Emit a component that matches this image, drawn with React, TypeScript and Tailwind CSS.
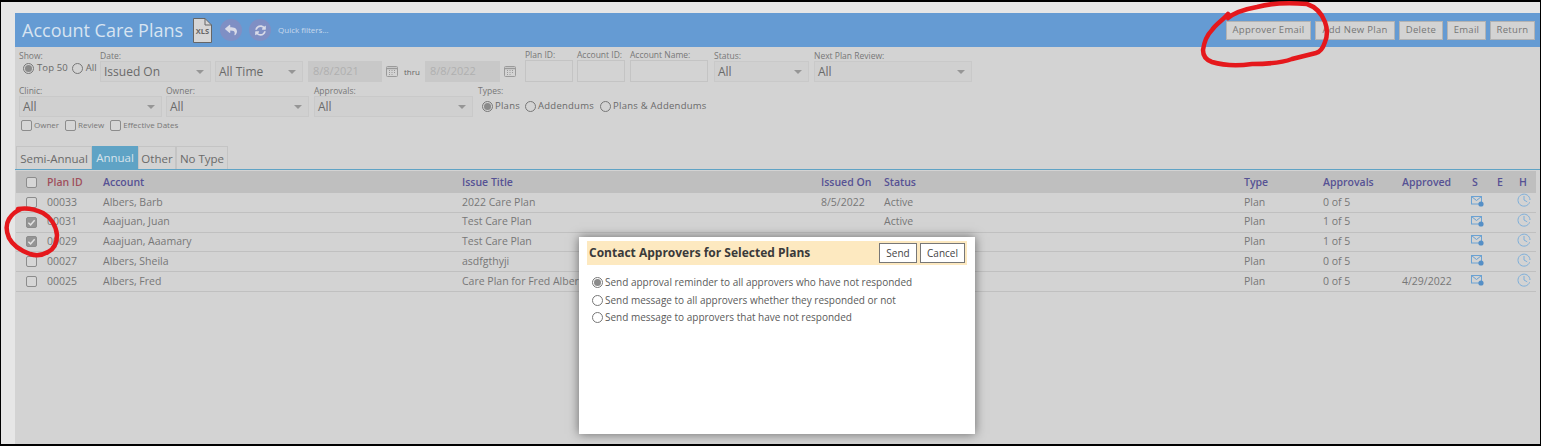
import React from "react";
import { FaReply, FaSyncAlt } from "react-icons/fa";

const Radio = ({ on, className = "" }: { on?: boolean; className?: string }) => (
  <span className={`inline-flex h-[11px] w-[11px] shrink-0 items-center justify-center rounded-full border border-[#777] bg-transparent ${className}`}>
    {on && <span className="h-[7px] w-[7px] rounded-full bg-[#8a8a8a]" />}
  </span>
);

const Check = ({ on, className = "" }: { on?: boolean; className?: string }) => (
  <span className={`inline-flex h-[11px] w-[11px] shrink-0 items-center justify-center rounded-[2px] border border-[#8c8c8c] ${on ? "bg-[#949494]" : "bg-[#d6d6d6]"} ${className}`}>
    {on && (
      <svg viewBox="0 0 10 10" className="h-[9px] w-[9px]">
        <path d="M1.5 5.2 4 7.6 8.5 2.5" fill="none" stroke="#e2e2e2" strokeWidth="1.6" />
      </svg>
    )}
  </span>
);

const Cal = ({ className = "" }: { className?: string }) => (
  <svg viewBox="0 0 12 12" className={`h-3 w-3 shrink-0 ${className}`}>
    <rect x="0.5" y="1.5" width="11" height="10" rx="1" fill="none" stroke="#9a9a9a" />
    <path d="M1 3.5h10" stroke="#9a9a9a" strokeWidth="1.4" />
    <path d="M3 5.5h1M5.5 5.5h1M8 5.5h1M3 7.5h1M5.5 7.5h1M8 7.5h1M3 9.5h1M5.5 9.5h1" stroke="#9a9a9a" />
  </svg>
);

const Label = ({ children }: { children: React.ReactNode }) => (
  <div className="h-[11px] whitespace-nowrap text-[8.5px] leading-[11px] text-[#777]">{children}</div>
);

const Select = ({ label, value, className }: { label?: string; value: string; className: string }) => (
  <div className={`shrink-0 ${className}`}>
    <Label>{label ?? "\u00a0"}</Label>
    <div className="flex h-[21px] items-center justify-between border border-[#c9c9c9] bg-[#d0d0d0] pt-px pl-[3px] pr-[6px] text-[12px] text-[#6a6a6a]">
      <span>{value}</span>
      <svg viewBox="0 0 8 4" className="h-1 w-2"><path d="M0 0h8L4 4z" fill="#969696" /></svg>
    </div>
  </div>
);

const TextField = ({ label, className }: { label: string; className: string }) => (
  <div className={`shrink-0 ${className}`}>
    <div className="h-[10px] whitespace-nowrap text-[8.5px] leading-[10px] text-[#777]">{label}</div>
    <div className="h-[22px] border border-[#c4c4c4] bg-[#d3d3d3]" />
  </div>
);

const DateField = ({ value, className }: { value: string; className: string }) => (
  <div className={`mt-[11px] flex h-[21px] shrink-0 items-center bg-[#c8c8c8] pl-[5px] text-[11px] text-[#b0b0b0] ${className}`}>{value}</div>
);

const Clock = () => (
  <svg viewBox="0 0 14 14" className="h-[14px] w-[14px] -translate-x-[2px] -translate-y-[2px]">
    <path d="M12.6 9.3A6 6 0 1 1 13 7" fill="none" stroke="#7fb0da" strokeWidth="1" />
    <path d="M7 3v4l3.2 1.8" fill="none" stroke="#7fb0da" strokeWidth="1" />
  </svg>
);

const MailIcon = () => (
  <svg viewBox="0 0 13 11" className="h-[11px] w-[13px] -translate-x-px -translate-y-[1px]">
    <rect x="0.5" y="0.5" width="10" height="7.5" fill="none" stroke="#6ba2d3" />
    <path d="M.5.5 5.5 4.5 10.5.5" fill="none" stroke="#6ba2d3" />
    <circle cx="10" cy="8" r="2.6" fill="#558fc6" />
  </svg>
);

const cols = "grid grid-cols-[31px_56px_359px_359px_63px_360px_79px_79px_70px_25px_22px_17px] items-center";

const rows = [
  { id: "00033", acc: "Albers, Barb", title: "2022 Care Plan", on: "8/5/2022", status: "Active", appr: "0 of 5", date: "", checked: false },
  { id: "00031", acc: "Aaajuan, Juan", title: "Test Care Plan", on: "", status: "Active", appr: "1 of 5", date: "", checked: true },
  { id: "00029", acc: "Aaajuan, Aaamary", title: "Test Care Plan", on: "", status: "", appr: "1 of 5", date: "", checked: true },
  { id: "00027", acc: "Albers, Sheila", title: "asdfgthyji", on: "", status: "", appr: "0 of 5", date: "", checked: false },
  { id: "00025", acc: "Albers, Fred", title: "Care Plan for Fred Albers", on: "", status: "", appr: "0 of 5", date: "4/29/2022", checked: false },
];

const heads: [string, string][] = [
  ["Plan ID", "text-[#a0505c]"],
  ["Account", "text-[#565294]"],
  ["Issue Title", "text-[#565294]"],
  ["Issued On", "text-[#565294]"],
  ["Status", "text-[#565294]"],
  ["Type", "text-[#565294]"],
  ["Approvals", "text-[#565294]"],
  ["Approved", "text-[#565294]"],
  ["S", "text-[#565294]"],
  ["E", "text-[#565294]"],
  ["H", "text-[#565294]"],
];

const TopButton = ({ children, className }: { children: string; className: string }) => (
  <button className={`flex h-[19px] items-center justify-center border border-[#b3b3b3] bg-[#d3d3d3] text-[9.5px] tracking-[0.3px] text-[#767676] ${className}`}>{children}</button>
);

const DlgOption = ({ on, children }: { on?: boolean; children: string }) => (
  <div className="flex h-[17.5px] items-center gap-[2px] text-[10px] text-[#5a5a5a]">
    <Radio on={on} />
    <span>{children}</span>
  </div>
);

export default function App() {
  return (
    <div className="relative h-[446px] w-[1541px] overflow-hidden bg-black pt-[2px] pb-[2px] pr-px pl-px font-['Open_Sans',sans-serif]">
      <div className="flex h-full flex-col bg-[#e6e6e6] pt-[11px] pl-[14px]">
        <div className="flex min-h-0 flex-1 flex-col bg-[#d3d3d3]">
          {/* Title bar */}
          <div className="flex h-[34px] shrink-0 items-center bg-[#659bd3] pl-[7px] pr-[5px]">
            <h1 className="w-[171px] text-[18px] leading-none font-normal whitespace-nowrap text-[#d7e4f1]">Account Care Plans</h1>
            <svg viewBox="0 0 19 25" className="h-[25px] w-[19px] shrink-0">
              <path d="M.5.5H12L18.5 7V24.5H.5z" fill="#d6d6d6" stroke="#666" />
              <path d="M12 .5V7H18.5" fill="none" stroke="#666" />
              <text x="9.5" y="16" textAnchor="middle" fontSize="7.5" fontWeight="700" fill="#666">XLS</text>
            </svg>
            <span className="ml-[8px] flex h-[22px] w-[22px] shrink-0 items-center justify-center rounded-full bg-[#7f8fc4]">
              <FaReply className="h-[12px] w-[12px] text-[#d9dbe8]" />
            </span>
            <span className="ml-[7px] flex h-[22px] w-[22px] shrink-0 items-center justify-center rounded-full bg-[#7f8fc4]">
              <FaSyncAlt className="h-[11px] w-[11px] text-[#d9dbe8]" />
            </span>
            <span className="ml-[7px] text-[8px] text-[#c7d9ec]">Quick filters...</span>
            <div className="ml-auto flex items-center gap-[4px]">
              <TopButton className="w-[85px]">Approver Email</TopButton>
              <TopButton className="w-[80px]">Add New Plan</TopButton>
              <TopButton className="w-[44px]">Delete</TopButton>
              <TopButton className="w-[39px]">Email</TopButton>
              <TopButton className="w-[45px]">Return</TopButton>
            </div>
          </div>

          {/* Filter row 1 */}
          <div className="mt-[3px] flex h-[33px] shrink-0 items-start pl-[4px]">
            <div className="w-[81px] shrink-0">
              <Label>Show:</Label>
              <div className="flex items-center pl-[4px] text-[9.5px] tracking-[0.1px] text-[#6a6a6a]">
                <Radio on />
                <span className="ml-[3px]">Top 50</span>
                <Radio className="ml-[4px]" />
                <span className="ml-[3px]">All</span>
              </div>
            </div>
            <Select label="Date:" value="Issued On" className="w-[111px]" />
            <Select value="All Time" className="ml-[4px] w-[88px]" />
            <DateField value="8/8/2021" className="ml-[5px] w-[74px]" />
            <Cal className="mt-[15px] ml-[4px]" />
            <span className="mt-[15px] ml-[6px] w-[16px] text-[8px] leading-[14px] text-[#666]">thru</span>
            <DateField value="8/8/2022" className="ml-[5px] w-[75px]" />
            <Cal className="mt-[15px] ml-[4px]" />
            <TextField label="Plan ID:" className="ml-[9px] w-[48px]" />
            <TextField label="Account ID:" className="ml-[4px] w-[48px]" />
            <TextField label="Account Name:" className="ml-[5px] w-[78px]" />
            <Select label="Status:" value="All" className="ml-[6px] w-[95px]" />
            <Select label="Next Plan Review:" value="All" className="ml-[5px] w-[158px]" />
          </div>

          {/* Filter row 2 */}
          <div className="mt-[2px] flex h-[32px] shrink-0 items-start pl-[4px]">
            <Select label="Clinic:" value="All" className="w-[143px]" />
            <Select label="Owner:" value="All" className="ml-[4px] w-[143px]" />
            <Select label="Approvals:" value="All" className="ml-[5px] w-[159px]" />
            <div className="ml-[5px] shrink-0">
              <Label>Types:</Label>
              <div className="mt-[3px] flex items-center pl-[4px] text-[9.5px] tracking-[0.25px] text-[#6a6a6a]">
                <Radio on />
                <span className="ml-[2px]">Plans</span>
                <Radio className="ml-[5px]" />
                <span className="ml-[2px]">Addendums</span>
                <Radio className="ml-[6px]" />
                <span className="ml-[2px]">Plans &amp; Addendums</span>
              </div>
            </div>
          </div>

          {/* Filter row 3 */}
          <div className="mt-[1px] flex h-[14px] shrink-0 items-center pl-[6px] text-[8px] text-[#777]">
            <Check />
            <span className="ml-[2px]">Owner</span>
            <Check className="ml-[6px]" />
            <span className="ml-[2px]">Review</span>
            <Check className="ml-[6px]" />
            <span className="ml-[2px]">Effective Dates</span>
          </div>

          {/* Tabs */}
          <div className="mt-[14px] flex h-[24px] shrink-0 items-stretch border-b border-[#5fa3c5] pl-px text-[11.5px] text-[#6a6a6a]">
            <div className="flex w-[76px] items-center justify-center border border-b-0 border-[#c4c4c4] pt-px">Semi-Annual</div>
            <div className="flex w-[46px] items-center justify-center bg-[#5fa3c5] pt-px text-[#d7e4ec]">Annual</div>
            <div className="flex w-[38px] items-center justify-center border border-b-0 border-[#c4c4c4] pt-px">Other</div>
            <div className="flex w-[52px] items-center justify-center border border-b-0 border-[#c4c4c4] pt-px">No Type</div>
          </div>

          {/* Table */}
          <div className="mt-px ml-px w-[1520px] shrink-0">
            <div className={`${cols} h-[22px] bg-[#bfbfbf] text-[10.5px] font-semibold`}>
              <Check className="ml-[10px]" />
              {heads.map(([h, c]) => (
                <span key={h} className={`whitespace-nowrap pt-[2px] ${c}`}>{h}</span>
              ))}
            </div>
            {rows.map((r) => (
              <div key={r.id} className={`${cols} h-[19.8px] border-b border-[#c0c0c0] text-[10.5px] text-[#777]`}>
                <Check on={r.checked} className="ml-[10px]" />
                <span>{r.id}</span>
                <span>{r.acc}</span>
                <span>{r.title}</span>
                <span>{r.on}</span>
                <span>{r.status}</span>
                <span>Plan</span>
                <span>{r.appr}</span>
                <span>{r.date}</span>
                <span><MailIcon /></span>
                <span />
                <span><Clock /></span>
              </div>
            ))}
          </div>
        </div>
      </div>

      {/* Dialog */}
      <div className="absolute top-[237px] left-[579px] h-[197px] w-[396px] bg-white px-[8px] pt-[4px] shadow-[0_0_10px_rgba(0,0,0,0.5)]">
        <div className="flex h-[24px] items-center justify-between bg-[#fde9c0] pr-[2px] pl-[2px]">
          <span className="text-[12px] font-bold text-[#3a3a3a]">Contact Approvers for Selected Plans</span>
          <div className="flex gap-[3px]">
            <button className="flex h-[20px] w-[38px] items-center justify-center border border-[#777] bg-white text-[10px] text-[#444]">Send</button>
            <button className="flex h-[20px] w-[45px] items-center justify-center border border-[#777] bg-white text-[10px] text-[#444]">Cancel</button>
          </div>
        </div>
        <div className="mt-[9px] pl-[5px]">
          <DlgOption on>Send approval reminder to all approvers who have not responded</DlgOption>
          <DlgOption>Send message to all approvers whether they responded or not</DlgOption>
          <DlgOption>Send message to approvers that have not responded</DlgOption>
        </div>
      </div>

      {/* Red annotations */}
      <svg className="pointer-events-none absolute inset-0 h-[446px] w-[1541px]" viewBox="0 0 1541 446" fill="none">
        <path
          d="M1228 18C1234 13 1246 9 1257 7C1268 4 1285 2 1307 4C1316 7 1322 14 1325 22C1328 30 1327 37 1325 42C1323 48 1320 52 1316 53C1308 55 1300 57 1292 59C1284 62 1270 64 1252 64C1238 66 1222 65 1212 62C1206 60 1203 56 1203 50C1204 43 1207 35 1212 30C1216 24 1222 21 1228 14"
          stroke="#e5181c"
          strokeWidth="4.5"
          strokeLinecap="round"
        />
        <path
          d="M18 209C24 208 33 208 43 213C50 217 56 225 57 235C57 243 54 249 48 252C43 255 36 256 30 254C22 251 13 246 9 238C6 231 6 224 9 219C12 214 16 211 21 209"
          stroke="#e5181c"
          strokeWidth="4.5"
          strokeLinecap="round"
        />
      </svg>
    </div>
  );
}
